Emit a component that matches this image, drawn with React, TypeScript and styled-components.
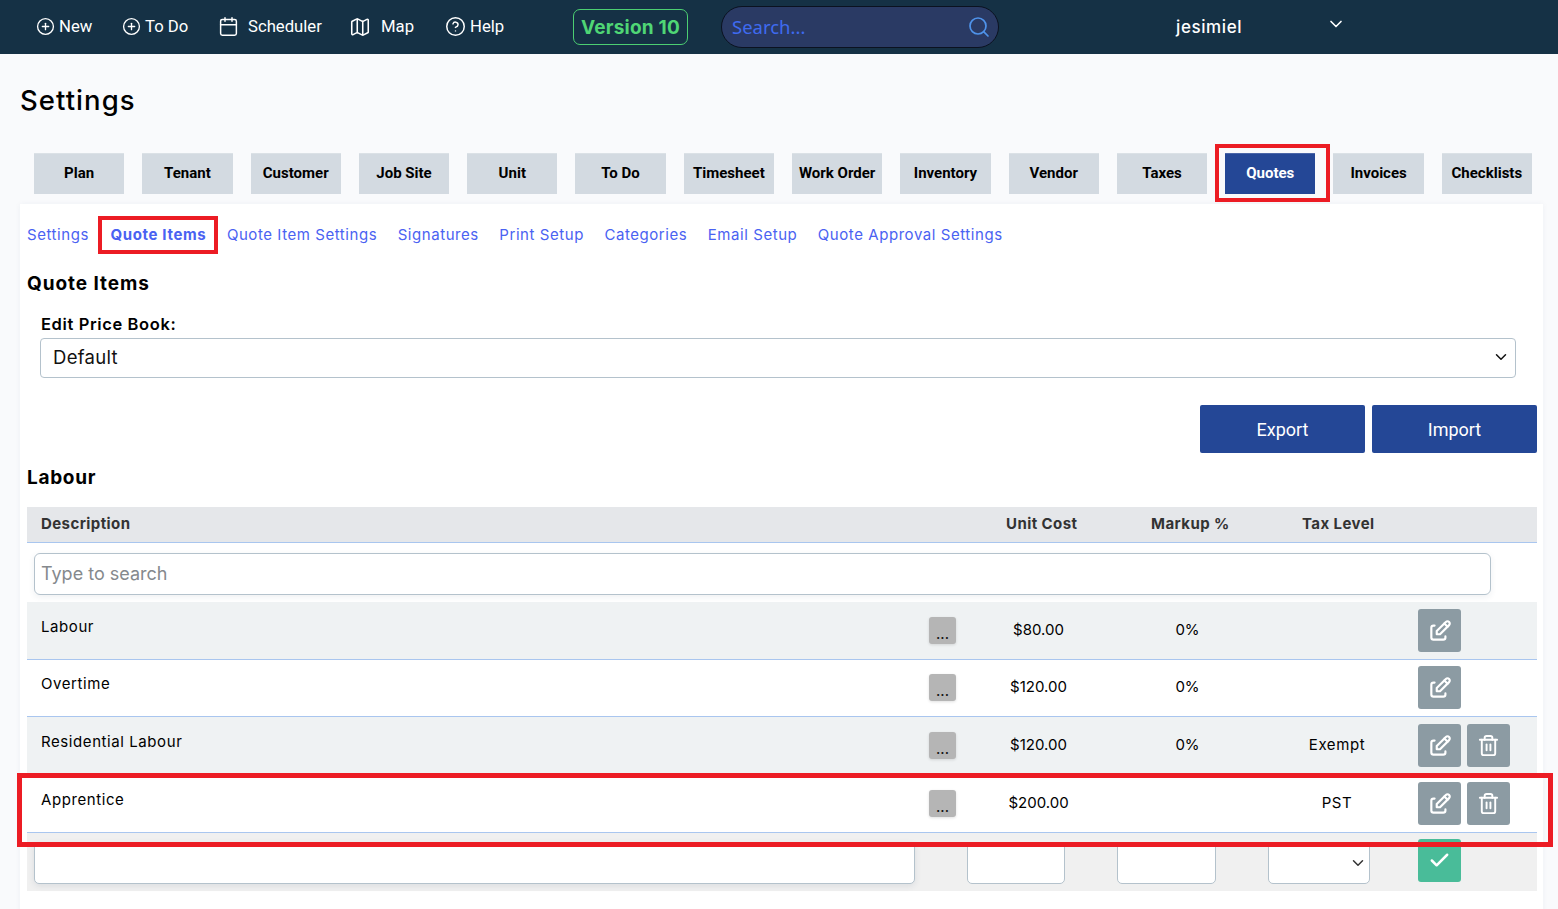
import React from "react";
import styled, { createGlobalStyle } from "styled-components";
import { CirclePlus, CircleHelp, Calendar, Map as MapIcon, Search, ChevronDown, Check, Trash2 } from "lucide-react";
import { TbEdit } from "react-icons/tb";

const body = `"Inter", "Noto Sans", sans-serif`;

const Global = createGlobalStyle`
  html, body { margin: 0; padding: 0; background: #f9fafc; }
  body { width: 1558px; height: 909px; overflow: hidden; font-family: ${body}; color: #000; }
  * { box-sizing: border-box; }
`;

const Page = styled.div`
  position: relative;
  width: 1558px;
  height: 909px;
  overflow: hidden;
`;

const TopBar = styled.header`
  height: 54px;
  background: #153145;
  display: flex;
  align-items: center;
  padding-left: 36px;
`;

const NavItem = styled.a<{ $w: number; $gap: number }>`
  display: flex;
  align-items: center;
  width: ${(p) => p.$w}px;
  gap: ${(p) => p.$gap}px;
  color: #fff;
  font: 400 16.7px "Roboto", sans-serif;
  white-space: nowrap;
  padding-bottom: 1px;
`;

const VersionBadge = styled.div`
  width: 115px;
  height: 36px;
  border: 1px solid #4ccf72;
  border-radius: 7px;
  color: #4fd675;
  font: 700 19px ${body};
  display: flex;
  align-items: center;
  justify-content: center;
  letter-spacing: 0.2px;
`;

const SearchBox = styled.div`
  width: 278px;
  height: 42px;
  margin-left: 33px;
  border: 1px solid #0b1220;
  border-radius: 21px;
  background: #2a3a64;
  display: flex;
  align-items: center;
  justify-content: space-between;
  padding: 0 7px 2px 10px;
  color: #3f6bf0;
  font: 400 18.5px "Noto Sans", sans-serif;
`;

const SearchIcon = styled(Search)`
  color: #4f93ea;
  margin-top: 2px;
`;

const UserName = styled.div`
  margin-left: 177px;
  width: 146px;
  color: #fff;
  font: 500 17px ${body};
  letter-spacing: 0.6px;
`;

const UserChevron = styled(ChevronDown)`
  color: #fff;
  margin: -7px 0 0 4px;
`;

const Title = styled.h1`
  margin: 0;
  padding: 28px 0 0 20px;
  height: 99px;
  font: 500 27.5px/36px ${body};
  letter-spacing: 1.05px;
  color: #000;
`;

const Tabs = styled.nav`
  display: grid;
  grid-template-columns: repeat(14, 1fr);
  column-gap: 18px;
  margin: 0 26px 0 34px;
`;

const Tab = styled.div<{ $active?: boolean }>`
  height: 41px;
  display: flex;
  align-items: center;
  justify-content: center;
  padding-bottom: 2px;
  background: ${(p) => (p.$active ? "#244796" : "#d3dae1")};
  color: ${(p) => (p.$active ? "#fff" : "#000")};
  font: 700 15px "Roboto", sans-serif;
  white-space: nowrap;
  border-top: 1px solid ${(p) => (p.$active ? "#4a66a8" : "#dbe1e6")};
`;

const Card = styled.main`
  margin: 10px 15px 0 20px;
  height: 720px;
  background: #fff;
  padding: 0 6px 0 7px;
  box-shadow: 0 0 6px rgba(40, 60, 90, 0.05);
`;

const SubNav = styled.div`
  display: flex;
  height: 62px;
  padding-top: 20px;
  gap: 20.5px;
`;

const SubLink = styled.a<{ $active?: boolean }>`
  color: #4a62f2;
  font: ${(p) => (p.$active ? 700 : 400)} 15px/22px ${body};
  letter-spacing: ${(p) => (p.$active ? 0.65 : 0.56)}px;
  white-space: nowrap;
  margin-left: ${(p) => (p.$active ? 1 : 0)}px;
`;

const SectionHead = styled.h2<{ $h: number; $top: number; $ls: number }>`
  margin: 0;
  height: ${(p) => p.$h}px;
  padding-top: ${(p) => p.$top}px;
  font: 700 19px/36px ${body};
  letter-spacing: ${(p) => p.$ls}px;
  color: #000;
`;

const FieldLabel = styled.div`
  padding-left: 14px;
  font: 600 16.5px/22px ${body};
  letter-spacing: 0.62px;
  margin-top: 1px;
`;

const SelectBox = styled.div`
  margin: 3px 21px 0 13px;
  height: 40px;
  border: 1px solid #b4c2cc;
  border-radius: 4px;
  display: flex;
  align-items: center;
  justify-content: space-between;
  padding: 0 5px 2px 12px;
  font: 400 18.5px ${body};
  letter-spacing: 0.3px;
  color: #111;
`;

const ActionRow = styled.div`
  display: flex;
  justify-content: flex-end;
  gap: 7px;
  margin-top: 27px;
`;

const ActionButton = styled.button`
  width: 165px;
  height: 48px;
  border: none;
  border-radius: 2px;
  background: #244796;
  color: #fff;
  font: 400 18px "Roboto", sans-serif;
`;

const Table = styled.section``;

const gridCols = "940px 143px 155px 144px 128px";

const HeadRow = styled.div`
  display: grid;
  grid-template-columns: ${gridCols};
  align-items: center;
  height: 36px;
  padding-bottom: 2px;
  background: #e5e7ea;
  border-bottom: 1px solid #a9c6ef;
  font: 700 15px ${body};
  letter-spacing: 0.42px;
  color: #333;
  margin-top: 1px;
`;

const HeadCell = styled.div<{ $pad: number }>`
  padding-left: ${(p) => p.$pad}px;
  white-space: nowrap;
`;

const SearchRow = styled.div`
  height: 59px;
  padding: 10px 46px 7px 7px;
`;

const SearchInput = styled.div`
  height: 42px;
  border: 1px solid #b4c2cc;
  border-radius: 6px;
  display: flex;
  align-items: center;
  padding: 0 0 2px 6px;
  color: #85898d;
  font: 400 18px ${body};
  box-shadow: 0 2px 6px rgba(40, 60, 90, 0.08);
`;

const Row = styled.div<{ $shade?: boolean; $h: number }>`
  display: grid;
  grid-template-columns: ${gridCols};
  height: ${(p) => p.$h}px;
  background: ${(p) => (p.$shade ? "#eff2f3" : "#fff")};
  border-bottom: 1px solid #a9c6ef;
  font: 400 15px ${body};
  color: #000;
`;

const DescCell = styled.div<{ $top: number }>`
  display: flex;
  justify-content: space-between;
  padding: ${(p) => p.$top}px 11px 0 14px;
  line-height: 20px;
`;

const DescText = styled.span`
  letter-spacing: 0.58px;
`;

const DotsButton = styled.div`
  width: 27px;
  height: 27px;
  border-radius: 3px;
  background: #b5b5b5;
  box-shadow: 0 1px 3px rgba(0, 0, 0, 0.12);
  color: #111;
  display: flex;
  align-items: flex-end;
  justify-content: center;
  font: 400 15px/20px ${body};
`;

const ValueCell = styled.div`
  display: flex;
  align-items: center;
  justify-content: center;
  padding-bottom: 3px;
`;

const TaxCell = styled(ValueCell)`
  letter-spacing: 0.6px;
`;

const ActionsCell = styled.div<{ $top: number }>`
  display: flex;
  gap: 6px;
  padding: ${(p) => p.$top}px 0 0 9px;
`;

const IconButton = styled.div<{ $green?: boolean }>`
  width: 43px;
  height: 43px;
  border-radius: 3px;
  background: ${(p) => (p.$green ? "#49bc99" : "#8c9ba3")};
  color: #fff;
  display: flex;
  align-items: center;
  justify-content: center;
`;

const FormRow = styled.div`
  display: grid;
  grid-template-columns: ${gridCols};
  height: 58px;
  background: #f0f0f0;
`;

const FormCell = styled.div<{ $l: number; $r: number }>`
  padding: 9px ${(p) => p.$r}px 7px ${(p) => p.$l}px;
`;

const FormInput = styled.div<{ $shadow?: boolean }>`
  height: 42px;
  background: #fff;
  border: 1px solid #b4c2cc;
  border-radius: 5px;
  display: flex;
  align-items: center;
  justify-content: flex-end;
  padding-right: 2px;
  color: #333;
  box-shadow: ${(p) => (p.$shadow ? "0 2px 6px rgba(40,60,90,0.1)" : "none")};
`;

const FormAction = styled.div`
  padding: 6px 0 0 9px;
`;

const Callout = styled.div<{ $x: number; $y: number; $w: number; $h: number; $b: number }>`
  position: absolute;
  left: ${(p) => p.$x}px;
  top: ${(p) => p.$y}px;
  width: ${(p) => p.$w}px;
  height: ${(p) => p.$h}px;
  border: ${(p) => p.$b}px solid #ec1c24;
  pointer-events: none;
`;

const tabs = ["Plan", "Tenant", "Customer", "Job Site", "Unit", "To Do", "Timesheet", "Work Order", "Inventory", "Vendor", "Taxes", "Quotes", "Invoices", "Checklists"];
const links = ["Settings", "Quote Items", "Quote Item Settings", "Signatures", "Print Setup", "Categories", "Email Setup", "Quote Approval Settings"];
const rows = [
  { d: "Labour", c: "$80.00", m: "0%", t: "", del: false, h: 58, shade: true, top: 15, act: 7 },
  { d: "Overtime", c: "$120.00", m: "0%", t: "", del: false, h: 57, shade: false, top: 14, act: 6 },
  { d: "Residential Labour", c: "$120.00", m: "0%", t: "Exempt", del: true, h: 58, shade: true, top: 15, act: 7 },
  { d: "Apprentice", c: "$200.00", m: "", t: "PST", del: true, h: 58, shade: false, top: 15, act: 7 },
];

export default function App() {
  return (
    <Page>
      <Global />
      <TopBar>
        <NavItem $w={86} $gap={4}><CirclePlus size={19} strokeWidth={1.7} />New</NavItem>
        <NavItem $w={96} $gap={4}><CirclePlus size={19} strokeWidth={1.7} />To Do</NavItem>
        <NavItem $w={131} $gap={9}><Calendar size={21} strokeWidth={1.7} />Scheduler</NavItem>
        <NavItem $w={96} $gap={10}><MapIcon size={22} strokeWidth={1.7} />Map</NavItem>
        <NavItem $w={128} $gap={4}><CircleHelp size={21} strokeWidth={1.7} />Help</NavItem>
        <VersionBadge>Version 10</VersionBadge>
        <SearchBox>Search...<SearchIcon size={24} strokeWidth={1.7} /></SearchBox>
        <UserName>jesimiel</UserName>
        <UserChevron size={20} strokeWidth={2} />
      </TopBar>
      <Title>Settings</Title>
      <Tabs>
        {tabs.map((t) => <Tab key={t} $active={t === "Quotes"}>{t}</Tab>)}
      </Tabs>
      <Card>
        <SubNav>
          {links.map((l) => <SubLink key={l} $active={l === "Quote Items"}>{l}</SubLink>)}
        </SubNav>
        <SectionHead $h={46} $top={0} $ls={0.95}>Quote Items</SectionHead>
        <FieldLabel>Edit Price Book:</FieldLabel>
        <SelectBox>Default<ChevronDown size={18} strokeWidth={2} /></SelectBox>
        <ActionRow>
          <ActionButton>Export</ActionButton>
          <ActionButton>Import</ActionButton>
        </ActionRow>
        <SectionHead $h={53} $top={7} $ls={0.7}>Labour</SectionHead>
        <Table>
          <HeadRow>
            <HeadCell $pad={14}>Description</HeadCell>
            <HeadCell $pad={39}>Unit Cost</HeadCell>
            <HeadCell $pad={41}>Markup %</HeadCell>
            <HeadCell $pad={37}>Tax Level</HeadCell>
          </HeadRow>
          <SearchRow><SearchInput>Type to search</SearchInput></SearchRow>
          {rows.map((r) => (
            <Row key={r.d} $shade={r.shade} $h={r.h}>
              <DescCell $top={r.top}><DescText>{r.d}</DescText><DotsButton>...</DotsButton></DescCell>
              <ValueCell>{r.c}</ValueCell>
              <ValueCell>{r.m}</ValueCell>
              <TaxCell>{r.t}</TaxCell>
              <ActionsCell $top={r.act}>
                <IconButton><TbEdit size={26} /></IconButton>
                {r.del && <IconButton><Trash2 size={23} strokeWidth={2} /></IconButton>}
              </ActionsCell>
            </Row>
          ))}
          <FormRow>
            <FormCell $l={7} $r={52}><FormInput $shadow /></FormCell>
            <FormCell $l={0} $r={45}><FormInput /></FormCell>
            <FormCell $l={7} $r={49}><FormInput /></FormCell>
            <FormCell $l={3} $r={39}><FormInput><ChevronDown size={18} strokeWidth={2} /></FormInput></FormCell>
            <FormAction><IconButton $green><Check size={23} strokeWidth={2.6} /></IconButton></FormAction>
          </FormRow>
        </Table>
      </Card>
      <Callout $x={1215} $y={144} $w={115} $h={58} $b={4} />
      <Callout $x={98} $y={216} $w={120} $h={38} $b={4} />
      <Callout $x={17} $y={773} $w={1536} $h={74} $b={5} />
    </Page>
  );
}
